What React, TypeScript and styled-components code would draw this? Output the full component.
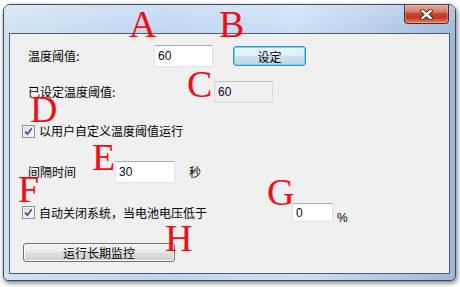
import styled, { createGlobalStyle } from "styled-components"

const Global = createGlobalStyle`
  html, body {
    margin: 0;
    padding: 0;
    background: #ffffff;
  }
  body {
    font-family: "Noto Sans CJK SC", "Liberation Sans", sans-serif;
    font-size: 12px;
  }
`

const cjk = `"Noto Sans CJK SC", "Liberation Sans", sans-serif`
const latin = `"Liberation Sans", "DejaVu Sans", sans-serif`

export default function App() {
  return (
    <Stage>
      <Global />
      <Window>
        <TitleBar>
          <CloseButton>
            <svg width="13" height="11" viewBox="0 0 13 11">
              <path d="M2.5 2 L10.5 9 M10.5 2 L2.5 9" stroke="#3a1a16" strokeWidth="4.2" strokeLinecap="square" />
              <path d="M2.5 2 L10.5 9 M10.5 2 L2.5 9" stroke="#ffffff" strokeWidth="2.4" strokeLinecap="square" />
            </svg>
          </CloseButton>
        </TitleBar>

        <Client>
          <Row $mt={11} $pl={18}>
            <Label $w={126}>温度阈值:</Label>
            <Edit $w={59} $h={22}>60</Edit>
            <PushButton $ml={20} $w={73} $h={20} $default>设定</PushButton>
          </Row>

          <Row $mt={14} $pl={18}>
            <Label $w={186}>已设定温度阈值:</Label>
            <Edit $w={59} $h={22} $readOnly>60</Edit>
          </Row>

          <Row $mt={20} $pl={12}>
            <CheckItem>
              <CheckBox />
              <span>以用户自定义温度阈值运行</span>
            </CheckItem>
          </Row>

          <Row $mt={22} $pl={18}>
            <Label $w={87}>间隔时间</Label>
            <Edit $w={60} $h={22}>30</Edit>
            <Label $ml={14}>秒</Label>
          </Row>

          <Row $mt={20} $pl={12}>
            <CheckItem $w={270}>
              <CheckBox />
              <span>自动关闭系统，当电池电压低于</span>
            </CheckItem>
            <Edit $w={41} $h={19}>0</Edit>
            <Unit>%</Unit>
          </Row>

          <Row $mt={21} $pl={13}>
            <PushButton $w={152} $h={19}>运行长期监控</PushButton>
          </Row>
        </Client>
      </Window>

      <Mark $x={129} $y={5}>A</Mark>
      <Mark $x={219} $y={5}>B</Mark>
      <Mark $x={187} $y={65}>C</Mark>
      <Mark $x={30} $y={90}>D</Mark>
      <Mark $x={92} $y={138}>E</Mark>
      <Mark $x={18} $y={170}>F</Mark>
      <Mark $x={267} $y={173}>G</Mark>
      <Mark $x={165} $y={219}>H</Mark>
    </Stage>
  )
}

function CheckBox() {
  return (
    <Box>
      <svg width="9" height="9" viewBox="0 0 9 9">
        <path d="M1.2 4.6 L3.4 7.2 L7.8 1.2" fill="none" stroke="#3e538a" strokeWidth="1.7" />
      </svg>
    </Box>
  )
}

const Stage = styled.div`
  position: relative;
  width: 460px;
  height: 287px;
  padding: 4px 0 0 3px;
  box-sizing: border-box;
  overflow: hidden;
`

const Window = styled.div`
  width: 453px;
  height: 277px;
  box-sizing: border-box;
  border: 1px solid #3d4a59;
  border-radius: 7px 7px 5px 5px;
  background: linear-gradient(to right, #cfe1f4 0%, #bed6f0 35%, #c9dff6 65%, #b3cbe6 85%, #9db9da 100%);
  box-shadow: 1px 2px 5px rgba(0, 0, 0, 0.55);
  display: flex;
  flex-direction: column;
  padding: 0 5px 6px 5px;
`

const TitleBar = styled.div`
  height: 28px;
  display: flex;
  justify-content: flex-end;
  align-items: flex-start;
  background: linear-gradient(to bottom, rgba(255, 255, 255, 0.25), rgba(255, 255, 255, 0));
  margin: 0 -5px;
  padding: 0 6px 0 0;
`

const CloseButton = styled.div`
  width: 45px;
  height: 19px;
  box-sizing: border-box;
  border: 1px solid #5c2a24;
  border-top: none;
  border-radius: 0 0 4px 4px;
  background: linear-gradient(to bottom, #e9a99a 0%, #d88270 35%, #c4412c 50%, #c43a27 72%, #dd8a6e 100%);
  box-shadow: inset 0 0 0 1px rgba(255, 210, 200, 0.35);
  display: flex;
  align-items: center;
  justify-content: center;
`

const Client = styled.div`
  flex: 1;
  border: 1px solid #4f5d6e;
  background: #f0f0f0;
  display: flex;
  flex-direction: column;
`

const Row = styled.div<{ $mt: number; $pl: number }>`
  display: flex;
  align-items: center;
  margin-top: ${p => p.$mt}px;
  padding-left: ${p => p.$pl}px;
`

const Label = styled.span<{ $w?: number; $ml?: number }>`
  font-family: ${cjk};
  font-size: 12px;
  line-height: 16px;
  color: #000;
  width: ${p => (p.$w ? `${p.$w}px` : "auto")};
  margin-left: ${p => p.$ml ?? 0}px;
  flex-shrink: 0;
`

const Edit = styled.div<{ $w: number; $h: number; $readOnly?: boolean }>`
  width: ${p => p.$w}px;
  height: ${p => p.$h}px;
  box-sizing: border-box;
  border: 1px solid ${p => (p.$readOnly ? "#d9dadb" : "#dfe3ea")};
  border-top-color: ${p => (p.$readOnly ? "#c2c3c5" : "#abadb3")};
  background: ${p => (p.$readOnly ? "#f0f0f0" : "#ffffff")};
  font-family: ${latin};
  font-size: 12px;
  color: #0a0a1e;
  padding-left: 3px;
  display: flex;
  align-items: center;
  flex-shrink: 0;
`

const PushButton = styled.div<{ $w: number; $h: number; $ml?: number; $default?: boolean }>`
  width: ${p => p.$w}px;
  height: ${p => p.$h}px;
  margin-left: ${p => p.$ml ?? 0}px;
  box-sizing: border-box;
  border: 1px solid ${p => (p.$default ? "#3a8fd0" : "#707070")};
  border-radius: 3px;
  background: ${p =>
    p.$default
      ? "linear-gradient(to bottom, #ecf5fa 0%, #e1eef6 48%, #cde1ec 52%, #bcd6e4 100%)"
      : "linear-gradient(to bottom, #f2f2f2 0%, #ebebeb 48%, #dddddd 52%, #cfcfcf 100%)"};
  box-shadow: inset 0 0 0 1px ${p => (p.$default ? "#6fd2f6" : "#fcfcfc")};
  font-family: ${cjk};
  font-size: 12px;
  color: #000;
  display: flex;
  align-items: center;
  justify-content: center;
  flex-shrink: 0;
`

const CheckItem = styled.label<{ $w?: number }>`
  display: flex;
  align-items: center;
  gap: 4px;
  width: ${p => (p.$w ? `${p.$w}px` : "auto")};
  font-family: ${cjk};
  font-size: 12px;
  line-height: 16px;
  color: #000;
  flex-shrink: 0;
`

const Box = styled.span`
  width: 13px;
  height: 13px;
  box-sizing: border-box;
  border: 1px solid #8e8f8f;
  background: linear-gradient(135deg, #d4d8de 0%, #eceef1 60%, #fbfbfb 100%);
  box-shadow: inset 0 0 0 1px #f4f4f4;
  display: flex;
  align-items: center;
  justify-content: center;
`

const Unit = styled.span`
  font-family: ${latin};
  font-size: 12px;
  line-height: 12px;
  color: #000;
  margin-left: 4px;
  align-self: flex-end;
  margin-bottom: -2px;
`

const Mark = styled.span<{ $x: number; $y: number }>`
  position: absolute;
  left: ${p => p.$x}px;
  top: ${p => p.$y}px;
  font-family: "Liberation Serif", "Times New Roman", serif;
  font-size: 38px;
  line-height: 1;
  color: #f20c14;
  pointer-events: none;
`
